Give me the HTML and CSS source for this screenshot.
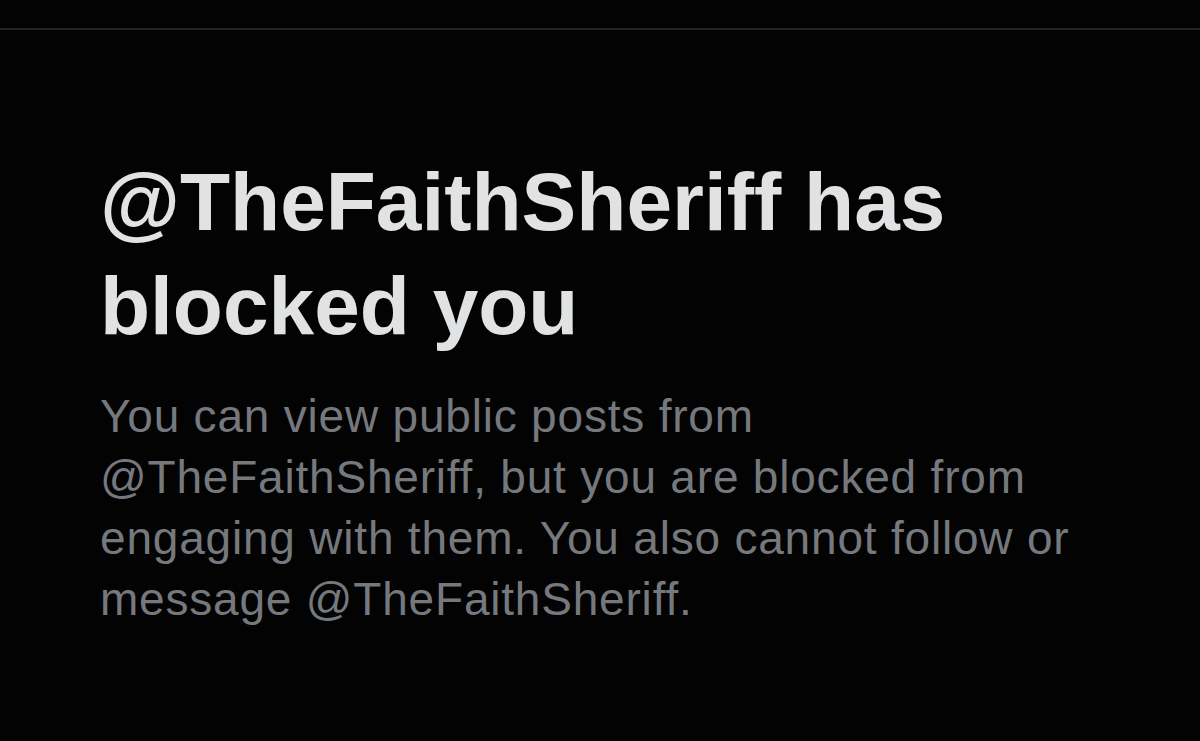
FILE: index.html
```html
<!DOCTYPE html>
<html lang="en">
<head>
<meta charset="utf-8">
<title>Blocked</title>
<link rel="stylesheet" href="styles.css">
</head>
<body>
<div class="page">
  <div class="divider"></div>
  <section class="notice">
    <h1 class="notice-title">@TheFaithSheriff has blocked you</h1>
    <p class="notice-body">You can view public posts from @TheFaithSheriff, but you are blocked from engaging with them. You also cannot follow or message @TheFaithSheriff.</p>
  </section>
</div>
</body>
</html>
```
FILE: styles.css
```css
html, body {
  margin: 0;
  padding: 0;
  background: #030303;
}
.page {
  width: 1200px;
  height: 741px;
  overflow: hidden;
  display: flex;
  flex-direction: column;
  padding-top: 28px;
  box-sizing: border-box;
}
.divider {
  height: 2px;
  background: #202224;
}
.notice {
  padding: 120px 0 0 100px;
  width: 980px;
}
.notice-title {
  margin: 0;
  font-family: "Liberation Sans", Arial, sans-serif;
  font-weight: 700;
  font-size: 82px;
  line-height: 104px;
  color: #e1e2e3;
}
.notice-body {
  margin: 28px 0 0;
  font-family: "Liberation Sans", Arial, sans-serif;
  font-size: 46px;
  line-height: 61px;
  letter-spacing: 0.8px;
  color: #75797e;
}
```
